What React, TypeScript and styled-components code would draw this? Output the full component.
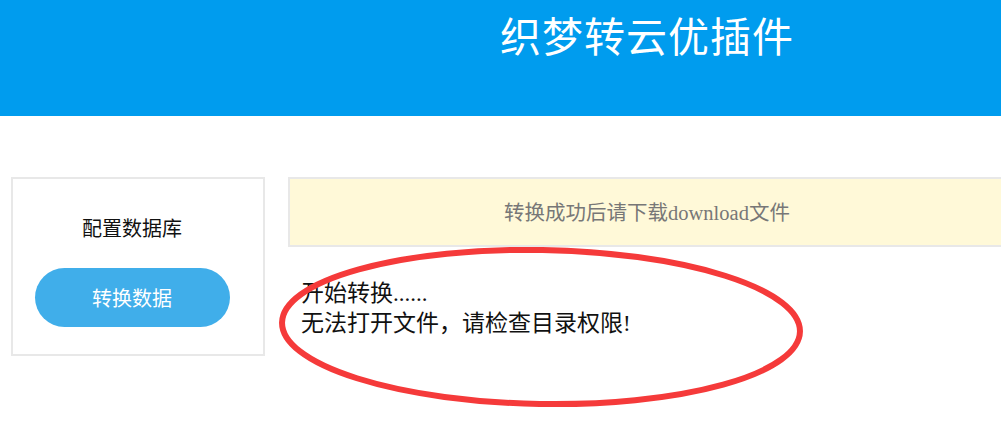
import React from 'react';
import styled, { createGlobalStyle } from 'styled-components';

const GlobalStyle = createGlobalStyle`
  html {
    overflow: hidden;
  }
  html, body {
    margin: 0;
    padding: 0;
    background: #fff;
  }
  body {
    font-family: "Liberation Serif", "Noto Sans CJK SC", serif;
  }
`;

const Page = styled.div`
  min-height: 100vh;
  display: flex;
  flex-direction: column;
`;

const Header = styled.header`
  height: 116px;
  flex-shrink: 0;
  background: #009cee;
  display: flex;
  align-items: flex-start;
  padding-left: 500px;
  box-sizing: border-box;
`;

const Title = styled.h1`
  margin: 12px 0 0;
  font-size: 41px;
  font-weight: normal;
  line-height: 52px;
  color: #fff;
  letter-spacing: 1px;
`;

const Main = styled.main`
  position: relative;
  flex: 1;
  display: flex;
  align-items: flex-start;
  gap: 23px;
  padding: 61px 0 0 11px;
  width: 1040px;
`;

const SidePanel = styled.aside`
  width: 254px;
  height: 179px;
  box-sizing: border-box;
  border: 2px solid #e8e8e8;
  display: flex;
  flex-direction: column;
  align-items: center;
  padding: 37px 12px 0 0;
`;

const PanelLabel = styled.div`
  font-size: 20px;
  line-height: 26px;
  color: #111;
`;

const ConvertButton = styled.button`
  margin-top: 26px;
  width: 195px;
  height: 59px;
  border: none;
  border-radius: 30px;
  background: #40aeea;
  color: #fff;
  font-family: inherit;
  font-size: 20px;
  cursor: pointer;
`;

const Content = styled.section`
  width: 718px;
  display: flex;
  flex-direction: column;
`;

const Notice = styled.div`
  height: 70px;
  box-sizing: border-box;
  border: 2px solid #e8e8e8;
  background: #fff9d8;
  color: #777;
  font-size: 20.5px;
  display: flex;
  align-items: center;
  justify-content: center;
  padding-bottom: 3px;
`;

const Log = styled.div`
  margin-top: 32px;
  padding-left: 13px;
  font-size: 23px;
  line-height: 30px;
  color: #111;
`;

const Marker = styled.svg`
  position: absolute;
  left: 274px;
  top: 127px;
  width: 534px;
  height: 168px;
  pointer-events: none;
  overflow: visible;
`;

const App: React.FC = () => {
  return (
    <Page>
      <GlobalStyle />
      <Header>
        <Title>织梦转云优插件</Title>
      </Header>
      <Main>
        <SidePanel>
          <PanelLabel>配置数据库</PanelLabel>
          <ConvertButton>转换数据</ConvertButton>
        </SidePanel>
        <Content>
          <Notice>转换成功后请下载download文件</Notice>
          <Log>
            <div>开始转换......</div>
            <div>无法打开文件，请检查目录权限!</div>
          </Log>
        </Content>
        <Marker viewBox="0 0 534 168">
          <ellipse
            cx="267"
            cy="84"
            rx="259"
            ry="77"
            fill="none"
            stroke="#f53a3a"
            strokeWidth="6"
            transform="rotate(1 267 84)"
          />
        </Marker>
      </Main>
    </Page>
  );
};

export default App;
